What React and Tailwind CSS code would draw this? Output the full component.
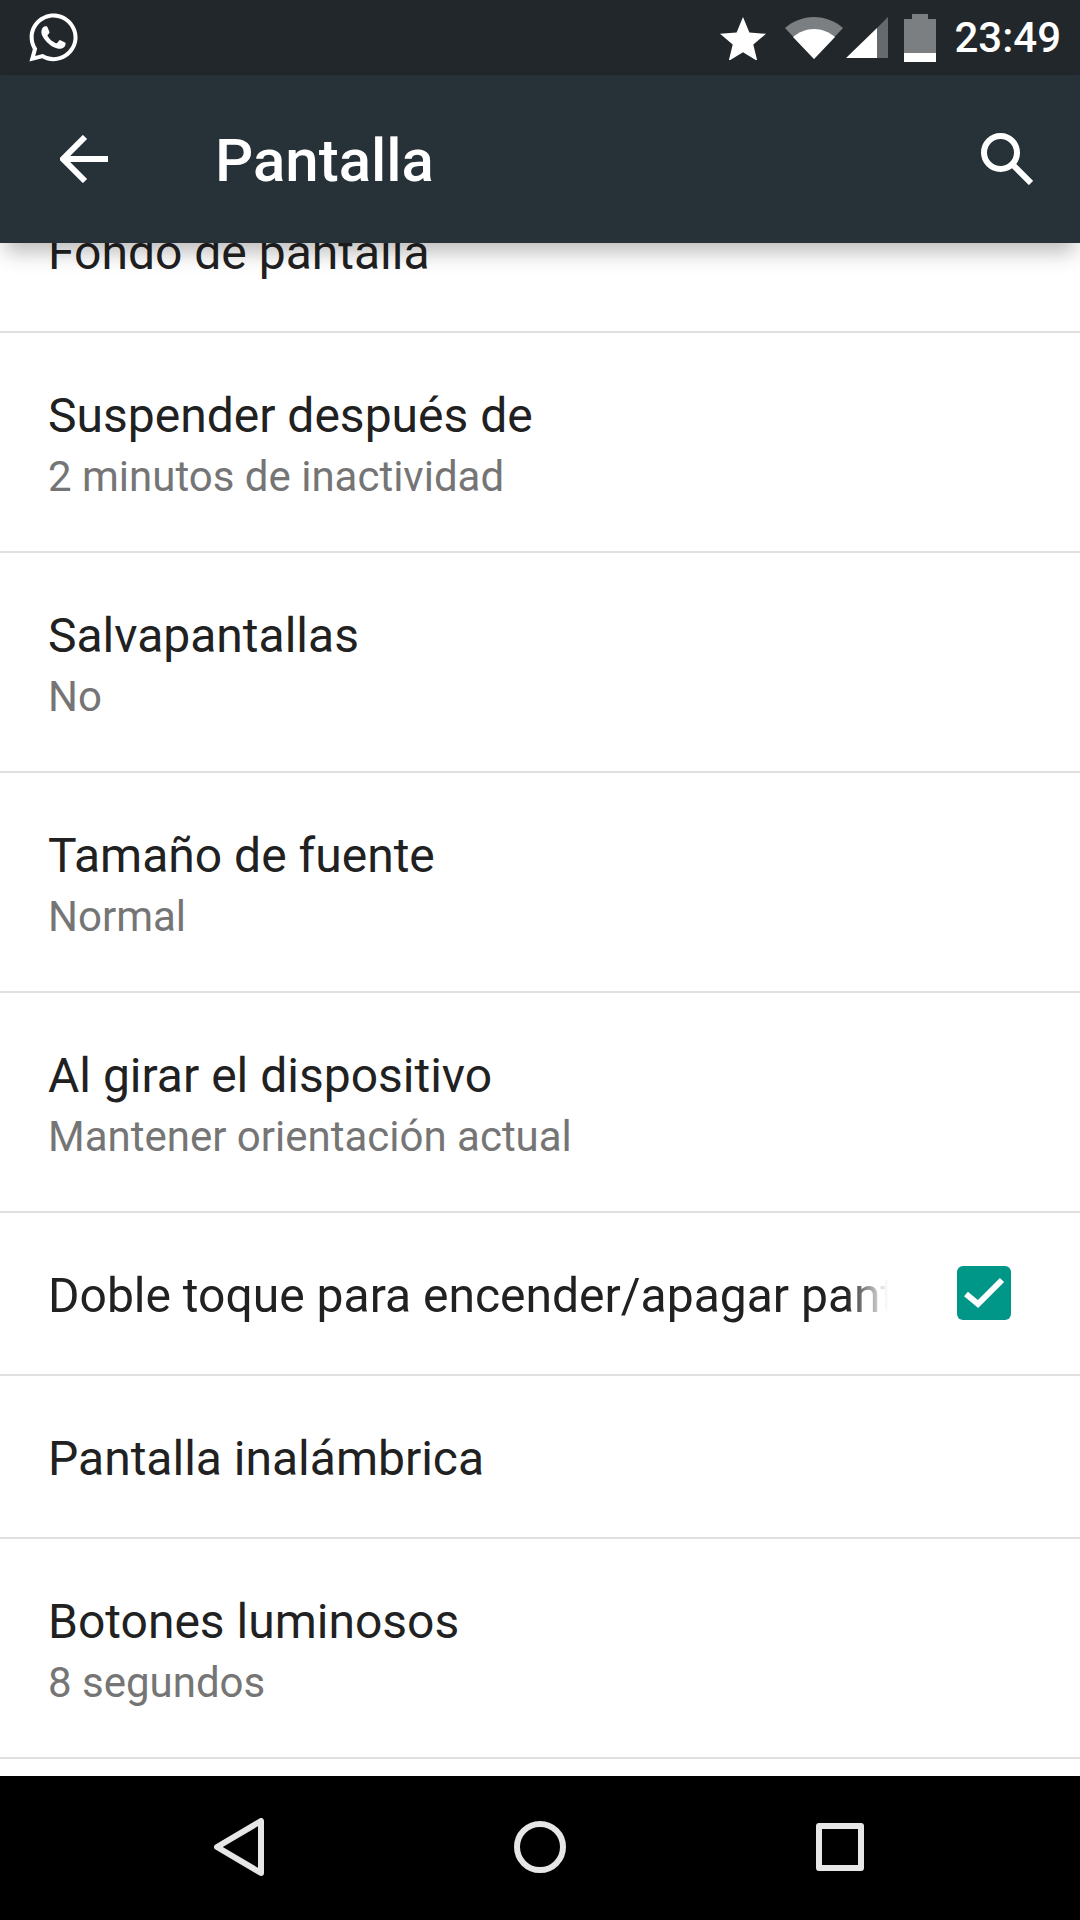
import React from 'react';
import { FaWhatsapp } from 'react-icons/fa';

const rows = [
  { title: 'Fondo de pantalla' },
  { title: 'Suspender después de', sub: '2 minutos de inactividad' },
  { title: 'Salvapantallas', sub: 'No' },
  { title: 'Tamaño de fuente', sub: 'Normal' },
  { title: 'Al girar el dispositivo', sub: 'Mantener orientación actual' },
  { title: 'Doble toque para encender/apagar pantalla', checked: true },
  { title: 'Pantalla inalámbrica' },
  { title: 'Botones luminosos', sub: '8 segundos' },
];

const StatusBar = () => (
  <div className="flex h-[75px] shrink-0 items-center justify-between bg-[#21272b] pl-[26px] pr-[19px] text-white">
    <FaWhatsapp className="h-[55px] w-[55px]" />
    <div className="flex items-center">
      <svg width="46" height="44" viewBox="0 0 46 44" fill="#fff">
        <path d="M23 1l6.4 15.6 16.6 1.2-12.7 10.8 4 16.4L23 36.200l-14.300 8.800 4-16.400L0 17.800l16.600-1.200z" />
      </svg>
      <svg className="ml-[19px]" width="58" height="44" viewBox="0 0 58 44">
        <path d="M0 12C8 5 18 1 29 1s21 4 29 11L29 43z" fill="#7b7f81" />
        <path d="M8 21c6-5 13-8 21-8s15 3 21 8L29 43z" fill="#fff" />
      </svg>
      <svg className="ml-[3px]" width="43" height="44" viewBox="0 0 43 44">
        <path d="M42 1v41H31V12z" fill="#666a6d" />
        <path d="M31 12v30H0z" fill="#fff" />
      </svg>
      <svg className="ml-[15px]" width="32" height="48" viewBox="0 0 32 48">
        <path d="M8 0h16v5h8v34H0V5h8z" fill="#7b7f81" />
        <path d="M0 39h32v9H0z" fill="#fff" />
      </svg>
      <span className="ml-[18px] text-[42px] font-medium leading-none">23:49</span>
    </div>
  </div>
);

const Toolbar = () => (
  <div className="relative z-10 flex h-[168px] shrink-0 items-center bg-[#263238] pl-[60px] pr-[47px] text-white shadow-[0_14px_20px_-5px_rgba(0,0,0,0.27)]">
    <svg width="48" height="48" viewBox="0 0 48 48" fill="none" stroke="#fff" strokeWidth="6">
      <path d="M48 24H5M25 2L3 24l22 22" />
    </svg>
    <h1 className="ml-[107px] pt-[3px] text-[60px] font-medium leading-none">Pantalla</h1>
    <svg className="ml-auto" width="52" height="52" viewBox="0 0 52 52" fill="none" stroke="#fff" strokeWidth="6">
      <circle cx="19.500" cy="19.500" r="16.500" />
      <path d="M31 31l19 19" />
    </svg>
  </div>
);

const Row = ({ title, sub, checked }) => (
  <div className={`flex items-center border-b-2 border-[#e0e0e0] pl-[48px] pr-[69px] ${sub ? 'h-[220px]' : 'h-[163px]'}`}>
    <div className={`min-w-0 flex-1 ${sub ? 'pt-[9px]' : 'pt-[4px]'}`}>
      <div
        className={`overflow-hidden whitespace-nowrap text-[48px] leading-[60px] text-[#212121] ${
          checked ? 'max-w-[840px] [mask-image:linear-gradient(to_right,black_95%,transparent)]' : ''
        }`}
      >
        {title}
      </div>
      {sub && <div className="mt-[1px] text-[42px] leading-[60px] text-[#757575]">{sub}</div>}
    </div>
    {checked && (
      <svg className="-mt-[2px] shrink-0" width="54" height="54" viewBox="0 0 54 54">
        <rect width="54" height="54" rx="6" fill="#009688" />
        <path d="M9 28l12 10L45 14" fill="none" stroke="#fff" strokeWidth="6" />
      </svg>
    )}
  </div>
);

const NavBar = () => (
  <div className="flex h-[144px] shrink-0 items-center justify-between bg-black pb-[2px] pl-[214px] pr-[216px]">
    <svg width="50" height="58" viewBox="0 0 50 58" fill="none" stroke="#e6e6e6" strokeWidth="6" strokeLinejoin="round">
      <path d="M47 3v52L3 29z" />
    </svg>
    <svg width="52" height="52" viewBox="0 0 52 52" fill="none" stroke="#e6e6e6" strokeWidth="6">
      <circle cx="26" cy="26" r="23" />
    </svg>
    <svg width="48" height="48" viewBox="0 0 48 48" fill="none" stroke="#e6e6e6" strokeWidth="6" strokeLinejoin="round">
      <rect x="3" y="3" width="42" height="42" />
    </svg>
  </div>
);

export default function App() {
  return (
    <div className="flex h-[1920px] w-[1080px] flex-col overflow-hidden bg-white font-['Roboto',sans-serif]">
      <StatusBar />
      <Toolbar />
      <div className="min-h-0 flex-1 overflow-hidden">
        <div className="-mt-[73px]">
          {rows.map((row) => (
            <Row key={row.title} {...row} />
          ))}
        </div>
      </div>
      <NavBar />
    </div>
  );
}
